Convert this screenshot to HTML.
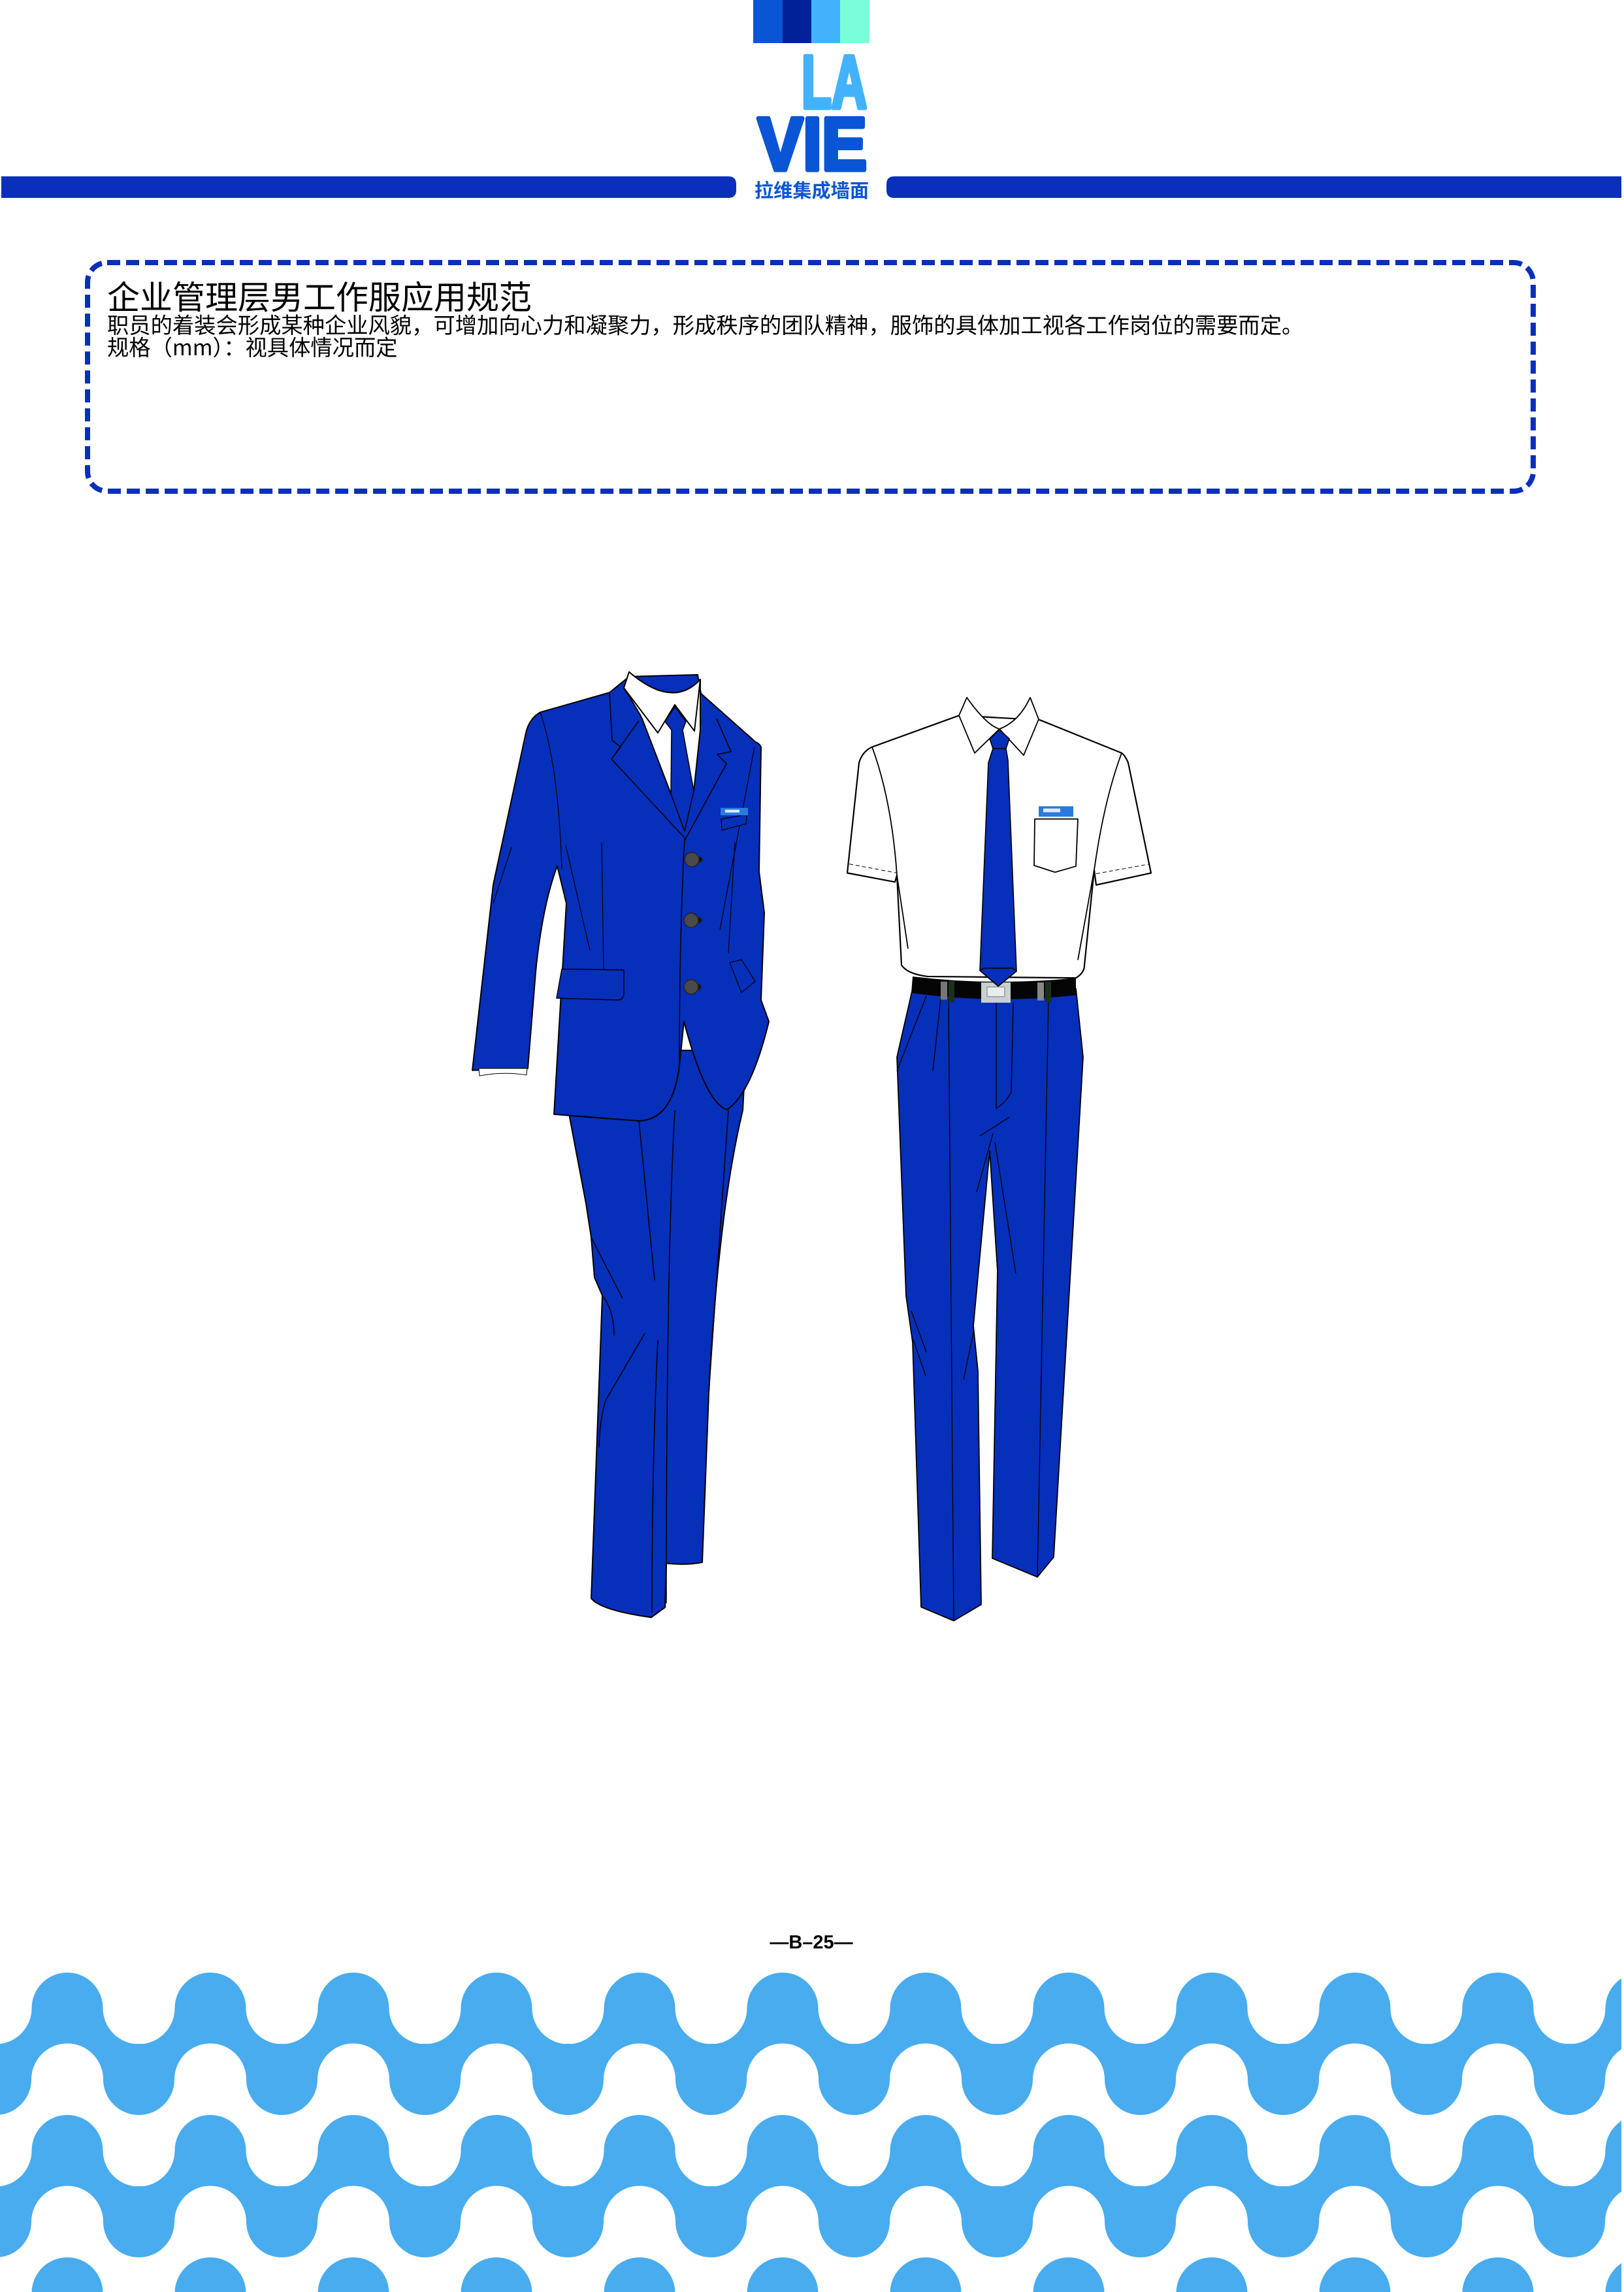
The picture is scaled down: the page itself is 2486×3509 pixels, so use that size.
<!DOCTYPE html>
<html><head><meta charset="utf-8">
<style>
html,body{margin:0;padding:0;background:#fff;}
body{width:2486px;height:3509px;position:relative;overflow:hidden;font-family:"Liberation Sans","Noto Sans CJK SC",sans-serif;}
.t{position:absolute;left:164px;white-space:nowrap;color:#000;font-family:"Noto Sans CJK SC","WenQuanYi Zen Hei",sans-serif;}
path,rect,circle,ellipse{vector-effect:non-scaling-stroke;}
</style></head><body>

<svg width="2486" height="3509" viewBox="0 0 2486 3509" style="position:absolute;left:0;top:0">
<defs>
<pattern id="wave" x="-6.5" y="3020" width="219" height="218" patternUnits="userSpaceOnUse">
  <rect x="0" y="54.5" width="219" height="109" fill="#48acee"/>
  <circle cx="0" cy="54.5" r="55" fill="#fff"/>
  <circle cx="219" cy="54.5" r="55" fill="#fff"/>
  <circle cx="109.5" cy="54.5" r="54.5" fill="#48acee"/>
  <circle cx="109.5" cy="163.5" r="55" fill="#fff"/>
  <circle cx="0" cy="163.5" r="54.5" fill="#48acee"/>
  <circle cx="219" cy="163.5" r="54.5" fill="#48acee"/>
</pattern>
</defs>

<path d="M2 270 H1115 Q1127 270 1127 282 V291 Q1127 303 1115 303 H2 Z" fill="#0a2fba"/>
<path d="M1369 270 H2482 V303 H1369 Q1357 303 1357 291 V282 Q1357 270 1369 270 Z" fill="#0a2fba"/>

<rect x="1153" y="0" width="45" height="66" fill="#0a55d5"/>
<rect x="1198" y="0" width="44" height="66" fill="#012199"/>
<rect x="1242" y="0" width="44" height="66" fill="#42b2fd"/>
<rect x="1286" y="0" width="45" height="66" fill="#79fed9"/>
<text x="1227" y="165" font-family="Liberation Sans" font-weight="bold" font-size="114" fill="#42b2fd" stroke="#42b2fd" stroke-width="7" stroke-linejoin="round" textLength="100" lengthAdjust="spacingAndGlyphs">LA</text>
<text x="1160" y="260" font-family="Liberation Sans" font-weight="bold" font-size="114" fill="#0a55d5" stroke="#0a55d5" stroke-width="7" stroke-linejoin="round" textLength="167" lengthAdjust="spacingAndGlyphs">VIE</text>
<text x="1155" y="302" font-family="Noto Sans CJK SC,sans-serif" font-weight="bold" font-size="29" fill="#0a55d5" textLength="175" lengthAdjust="spacingAndGlyphs">拉维集成墙面</text>

<rect x="134" y="402" width="2213" height="350" rx="30" fill="none" stroke="#0a2fba" stroke-width="8" stroke-dasharray="20 9"/>

<g stroke="#000" stroke-width="2" stroke-linejoin="round">
<g transform="translate(0,1700) scale(1,1.531) translate(0,-1700)">
<path d="M866 1640 L872 1707 L897 1793 L905 1827 L910 1867 L922 1885 L905 2188 Q920 2200 997 2207 L1018 2197 L1020 2153 Q1050 2155 1075 2152 L1085 1983 Q1100 1800 1137 1700 L1142 1640 Z" fill="#062fba"/>
<path d="M1033 1700 Q1020 1850 1020 2193 M978 1710 L1002 1870 M1007 1930 Q998 2050 998 2202 M1115 1700 L1085 1983 M905 1827 L953 1888 M922 1885 Q940 1900 940 1925 M987 1923 L927 1990 Q918 2010 917 2037" fill="none" stroke-width="1.5"/>
</g>
<g transform="translate(0,1000) scale(1,1.435) translate(0,-1000)">
<path d="M963 1025 L933 1042 L827 1063 Q810 1070 805 1085 L755 1247 L723 1445 L808 1443 L820 1340 Q830 1270 853 1227 L867 1267 L848 1492 L978 1499 Q1030 1498 1040 1440 L1047 1393 Q1080 1480 1113 1487 Q1150 1470 1177 1393 L1165 1370 L1170 1277 L1162 1233 L1165 1100 Q1162 1096 1157 1095 L1073 1043 L1068 1023 Z" fill="#062fba"/>
<path d="M963 1020 L955 1037 Q980 1065 983 1070 L1027 1150 L1062 1147 L1072 1082 L1072 1028 Q1030 1060 963 1020 Z" fill="#fff"/>
<path d="M963 1020 L955 1037 L1007 1085 L1033 1055 L1063 1083 L1072 1028 Q1030 1060 963 1020 Z" fill="#fff"/>
<path d="M1018 1073 L1033 1057 L1050 1073 L1045 1082 L1062 1147 L1048 1190 L1027 1150 L1028 1082 Z" fill="#062fba" stroke-width="1.5"/>
<path d="M933 1042 L937 1093 L950 1100 L936 1113 L1048 1197 M978 1072 L936 1113 M1048 1200 L1112 1118 L1098 1108 L1119 1105 L1097 1070 M1048 1197 Q1040 1300 1040 1440" fill="none" stroke-width="1.5"/>
<path d="M827 1063 Q855 1120 860 1230 M866 1205 L903 1317 M921 1202 L924 1337 M783 1207 L755 1267 M1125 1202 L1115 1320 M1155 1100 L1102 1295" fill="none" stroke-width="1.2"/>
<path d="M860 1337 L955 1338 L955 1362 Q955 1370 945 1370 L852 1368 Z" fill="#062fba" stroke-width="1.5"/>
<path d="M1104 1177 L1143 1172 L1142 1182 L1105 1189 Z" fill="#062fba" stroke-width="1.2"/>
<path d="M1117 1330 L1135 1327 L1156 1350 L1135 1362 Z" fill="#062fba" stroke-width="1.2"/>
<path d="M733 1443 L807 1443 L806 1450 Q770 1446 734 1451 Z" fill="#fff" stroke-width="1"/>
<rect x="1103" y="1165" width="42" height="8" fill="#2a7ae0" stroke="none"/>
<rect x="1110" y="1167" width="22" height="3" fill="#dce9ff" stroke="none"/>
</g>
</g>
<g fill="#4a4a4a" stroke="#222" stroke-width="1.5">
<rect x="1062" y="1312" width="13" height="8" rx="4" fill="#111"/>
<rect x="1061" y="1405" width="13" height="8" rx="4" fill="#111"/>
<rect x="1060" y="1507" width="13" height="8" rx="4" fill="#111"/>
<circle cx="1059" cy="1316" r="11"/>
<circle cx="1058" cy="1409" r="11"/>
<circle cx="1058" cy="1511" r="11"/>
</g>

<g stroke="#000" stroke-width="2.2" stroke-linejoin="round">
<g transform="translate(0,1500) scale(1,1.913) translate(0,-1500)">
<path d="M1397 1507 L1373 1562 L1387 1753 L1397 1790 L1410 2002 L1460 2013 L1502 2000 L1497 1813 L1490 1777 L1515 1637 L1527 1733 L1519 1963 L1588 1978 L1613 1962 L1658 1562 L1647 1507 Z" fill="#062fba" stroke-width="1.8"/>
<path d="M1452 1515 L1460 2013 M1605 1517 L1588 1978 M1525 1517 L1525 1603 M1551 1518 L1548 1590 Q1540 1598 1525 1603 M1418 1513 L1373 1573 M1440 1515 L1428 1573 M1500 1625 L1545 1610 M1520 1623 L1495 1670 M1523 1630 L1555 1735 M1395 1765 L1418 1798 M1398 1788 L1417 1817 M1491 1780 L1475 1820" fill="none" stroke-width="1.3"/>
</g>
<g transform="translate(0,1030) scale(1,1.148) translate(0,-1030)">
<path d="M1468 1087 L1335 1129 Q1320 1135 1315 1150 L1297 1297 L1370 1309 L1373 1300 L1380 1420 Q1390 1432 1420 1435 L1647 1437 Q1660 1430 1660 1420 L1675 1293 L1678 1313 L1762 1297 L1727 1150 Q1722 1140 1717 1137 L1592 1093 Z" fill="#fff"/>
<path d="M1335 1129 Q1365 1200 1373 1300 L1390 1398 M1717 1137 Q1690 1200 1675 1293 L1650 1413" fill="none" stroke-width="1.8"/>
<path d="M1300 1285 L1373 1297 M1678 1298 L1760 1285" fill="none" stroke-width="1" stroke-dasharray="6 4"/>
<path d="M1480 1063 Q1510 1100 1530 1105 Q1560 1095 1577 1063 L1590 1092 L1567 1140 L1530 1105 L1492 1137 L1468 1087 Z" fill="#fff" stroke-width="1.8"/>
<path d="M1530 1106 L1515 1118 L1520 1131 L1540 1131 L1545 1118 Z M1520 1131 L1513 1150 L1500 1427 L1528 1448 L1556 1428 L1543 1147 L1540 1131 Z" fill="#062fba" stroke-width="1.6"/>
<path d="M1584 1225 L1650 1225 L1647 1288 L1615 1296 L1583 1287 Z" fill="#fff" stroke-width="1.8"/>
<rect x="1590" y="1208" width="53" height="14" fill="#2a7ae0" stroke="none"/>
<rect x="1597" y="1211" width="26" height="5" fill="#dce9ff" stroke="none"/>
<path d="M1397 1435 Q1520 1448 1647 1437 L1647 1460 Q1520 1472 1395 1457 Z" fill="#050505" stroke="none"/>
<rect x="1452" y="1441" width="9" height="28" fill="#1c3020" stroke="none"/>
<rect x="1600" y="1442" width="9" height="28" fill="#1c3020" stroke="none"/>
<rect x="1440" y="1442" width="10" height="24" fill="#777" stroke="none"/>
<rect x="1588" y="1443" width="10" height="24" fill="#888" stroke="none"/>
<rect x="1502" y="1443" width="45" height="27" fill="#c9d0d0" stroke="none"/>
<rect x="1511" y="1449" width="27" height="13" fill="#e8eeee" stroke="#999" stroke-width="1.5"/>
<path d="M1500 1427 L1528 1448 L1556 1428 L1550 1424 L1506 1424 Z" fill="#062fba" stroke-width="1.6"/>
</g>
</g>

<text x="1242" y="2983" text-anchor="middle" font-family="Liberation Sans" font-weight="bold" font-size="29" fill="#000">—B–25—</text>

<rect x="0" y="3020" width="2482" height="489" fill="url(#wave)"/>
</svg>

<div class="t" style="top:424px;font-size:50px;line-height:56px;">企业管理层男工作服应用规范</div>
<div class="t" style="top:477px;font-size:33.3px;line-height:38px;">职员的着装会形成某种企业风貌，可增加向心力和凝聚力，形成秩序的团队精神，服饰的具体加工视各工作岗位的需要而定。</div>
<div class="t" style="top:511px;font-size:33.3px;line-height:38px;">规格（mm）：视具体情况而定</div>

</body></html>
